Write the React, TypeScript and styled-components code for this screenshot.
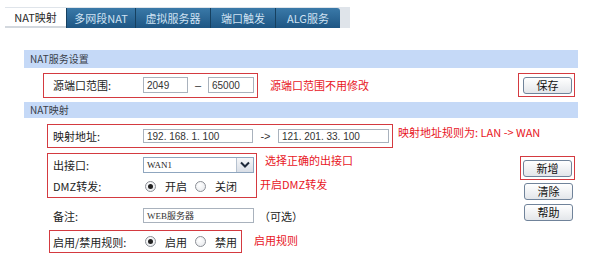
import { FC } from "react";
import styled, { createGlobalStyle, css } from "styled-components";

const colors = {
  text: "#333333",
  note: "#e8161e",
  annot: "#d43a40",
  bar: "#c5d9f7",
  inputBorder: "#a9b2bd",
  strip: "#dfe4ea",
};

const GlobalStyle = createGlobalStyle`
  body {
    margin: 0;
    background: #fff;
    color: ${colors.text};
    font-family: "Noto Sans CJK SC", "Noto Sans", sans-serif;
    font-size: 11px;
  }
`;

const Page = styled.div`
  width: 600px;
  height: 259px;
  overflow: hidden;
  padding-top: 7px;
  box-sizing: border-box;
`;

const TabStrip = styled.div`
  display: flex;
  margin-left: 5px;
  width: 345px;
  height: 21px;
  padding-top: 1px;
  box-sizing: border-box;
  background: ${colors.strip};
`;

const Tab = styled.div<{ $w: number; $active?: boolean; $last?: boolean }>`
  width: ${(p) => p.$w}px;
  display: flex;
  align-items: center;
  justify-content: center;
  font-size: 11px;
  box-sizing: border-box;
  ${(p) =>
    p.$active
      ? css`
          background: #fff;
          color: #2a2a2a;
          border-bottom: 2px solid #d3d8de;
        `
      : css`
          background: linear-gradient(#3a79a8, #1e5684);
          color: #cfe2f3;
          border-left: 1px solid #16405f;
        `}
  ${(p) => p.$last && "border-top-right-radius: 3px;"}
`;

const Panel = styled.div`
  margin: 22px 0 0 24px;
  width: 554px;
`;

const SectionBar = styled.div<{ $h: number }>`
  height: ${(p) => p.$h}px;
  line-height: ${(p) => p.$h}px;
  background: ${colors.bar};
  padding-left: 6px;
  font-size: 10px;
  color: #3a3f4a;
`;

const ServiceRow = styled.div`
  height: 34px;
  display: flex;
  align-items: center;
  padding: 0 3px 0 19px;
`;

const Body = styled.div`
  display: flex;
  height: 142px;
`;

const LeftCol = styled.div`
  flex: 1;
  min-width: 0;
  display: flex;
  flex-direction: column;
`;

const ButtonCol = styled.div`
  width: 55px;
  flex-shrink: 0;
  margin-right: 3px;
  padding-top: 38px;
  display: flex;
  flex-direction: column;
  gap: 3px;
`;

const Line = styled.div<{ $top: number; $left: number }>`
  display: flex;
  align-items: flex-start;
  margin-top: ${(p) => p.$top}px;
  margin-left: ${(p) => p.$left}px;
`;

const AnnotBox = styled.div<{ $w: number; $h: number; $pl: number; $col?: boolean }>`
  width: ${(p) => p.$w}px;
  height: ${(p) => p.$h}px;
  flex-shrink: 0;
  padding-left: ${(p) => p.$pl}px;
  box-sizing: border-box;
  border: 1px solid ${colors.annot};
  display: flex;
  flex-direction: ${(p) => (p.$col ? "column" : "row")};
  align-items: ${(p) => (p.$col ? "stretch" : "center")};
  justify-content: ${(p) => (p.$col ? "space-around" : "flex-start")};
  white-space: nowrap;
`;

const Field = styled.div<{ $h?: number }>`
  display: flex;
  align-items: center;
  height: ${(p) => p.$h ?? 22}px;
  white-space: nowrap;
`;

const Label = styled.span`
  width: 90px;
  flex-shrink: 0;
  font-size: 11px;
  color: #222;
`;

const TextInput = styled.div<{ $w: number; $h: number; $small?: boolean }>`
  width: ${(p) => p.$w}px;
  height: ${(p) => p.$h}px;
  flex-shrink: 0;
  box-sizing: border-box;
  border: 1px solid ${colors.inputBorder};
  background: #fff;
  padding-left: 3px;
  display: flex;
  align-items: center;
  font-family: "Liberation Sans", "Noto Sans CJK SC", sans-serif;
  font-size: ${(p) => (p.$small ? 9 : 10)}px;
  color: #333;
  white-space: nowrap;
`;

const Between = styled.span<{ $w: number }>`
  width: ${(p) => p.$w}px;
  flex-shrink: 0;
  text-align: center;
  font-family: "Liberation Sans", sans-serif;
  font-size: 11px;
  color: #333;
`;

const Note = styled.span<{ $ml: number; $mt?: number }>`
  margin-left: ${(p) => p.$ml}px;
  margin-top: ${(p) => p.$mt ?? 0}px;
  color: ${colors.note};
  font-size: 11px;
  white-space: nowrap;
  line-height: 14px;
`;

const NoteCol = styled.div`
  display: flex;
  flex-direction: column;
  gap: 10px;
`;

const Hint = styled.span`
  margin-left: 5px;
  font-size: 11px;
  color: #222;
`;

const Select = styled.div`
  width: 111px;
  height: 16px;
  box-sizing: border-box;
  border: 1px solid #8fa6bf;
  display: flex;
  align-items: stretch;
  background: #fff;
`;

const SelectValue = styled.span`
  flex: 1;
  padding-left: 3px;
  display: flex;
  align-items: center;
  font-family: "Liberation Serif", serif;
  font-size: 9px;
  color: #222;
`;

const SelectArrow = styled.span`
  width: 16px;
  display: flex;
  align-items: center;
  justify-content: center;
  background: linear-gradient(#f6f7f9, #d9dee6);
  border-left: 1px solid #b6c2d0;
`;

const Radio = styled.span<{ $on?: boolean }>`
  width: 11px;
  height: 11px;
  flex-shrink: 0;
  margin: 0 9px 0 2px;
  border-radius: 50%;
  box-sizing: border-box;
  border: 1px solid #8b8f96;
  background: radial-gradient(circle at 40% 35%, #fff, #e4e6ea);
  display: inline-flex;
  align-items: center;
  justify-content: center;
  &::after {
    content: "";
    width: 5px;
    height: 5px;
    border-radius: 50%;
    background: ${(p) => (p.$on ? "#222" : "transparent")};
  }
`;

const RadioText = styled.span`
  font-size: 11px;
  color: #222;
  margin-right: 6px;
  flex-shrink: 0;
  &:last-child {
    margin-right: 0;
  }
`;

const ButtonBox = styled.div<{ $pl: number; $marked?: boolean }>`
  height: ${(p) => (p.$marked ? 24 : 17)}px;
  box-sizing: border-box;
  padding-left: ${(p) => p.$pl}px;
  display: flex;
  align-items: center;
  border: 1px solid ${(p) => (p.$marked ? colors.annot : "transparent")};
`;

const Button = styled.button`
  width: 49px;
  height: 17px;
  padding: 0;
  border: 1px solid #70839a;
  border-radius: 3px;
  background: linear-gradient(#ffffff, #e3e6ea);
  font-family: "Noto Sans CJK SC", sans-serif;
  font-size: 11px;
  color: #111;
  line-height: 15px;
`;

const RadioGroup: FC<{ a: string; b: string }> = ({ a, b }) => (
  <>
    <Radio $on />
    <RadioText>{a}</RadioText>
    <Radio />
    <RadioText>{b}</RadioText>
  </>
);

const App: FC = () => {
  return (
    <Page>
      <GlobalStyle />
      <TabStrip>
        <Tab $w={61} $active>NAT映射</Tab>
        <Tab $w={69}>多网段NAT</Tab>
        <Tab $w={75}>虚拟服务器</Tab>
        <Tab $w={65}>端口触发</Tab>
        <Tab $w={65} $last>ALG服务</Tab>
      </TabStrip>

      <Panel>
        <SectionBar $h={18}>NAT服务设置</SectionBar>
        <ServiceRow>
          <AnnotBox $w={215} $h={25} $pl={9}>
            <Label>源端口范围:</Label>
            <TextInput $w={45} $h={16}>2049</TextInput>
            <Between $w={20}>–</Between>
            <TextInput $w={46} $h={16}>65000</TextInput>
          </AnnotBox>
          <Note $ml={12}>源端口范围不用修改</Note>
          <ButtonBox $pl={4} $marked style={{ marginLeft: "auto", width: 57 }}>
            <Button>保存</Button>
          </ButtonBox>
        </ServiceRow>

        <SectionBar $h={16}>NAT映射</SectionBar>
        <Body>
          <LeftCol>
            <Line $top={6} $left={23}>
              <AnnotBox $w={346} $h={24} $pl={5}>
                <Label>映射地址:</Label>
                <TextInput $w={110} $h={14}>192. 168. 1. 100</TextInput>
                <Between $w={25}>-&gt;</Between>
                <TextInput $w={111} $h={14}>121. 201. 33. 100</TextInput>
              </AnnotBox>
              <Note $ml={5} $mt={1}>映射地址规则为: LAN -&gt; WAN</Note>
            </Line>

            <Line $top={5} $left={23}>
              <AnnotBox $w={210} $h={45} $pl={5} $col>
                <Field>
                  <Label>出接口:</Label>
                  <Select>
                    <SelectValue>WAN1</SelectValue>
                    <SelectArrow>
                      <svg width="10" height="7" viewBox="0 0 10 7">
                        <polyline points="1,1.5 5,5.5 9,1.5" fill="none" stroke="#1e2a3a" strokeWidth="2" />
                      </svg>
                    </SelectArrow>
                  </Select>
                </Field>
                <Field>
                  <Label>DMZ转发:</Label>
                  <RadioGroup a="开启" b="关闭" />
                </Field>
              </AnnotBox>
              <NoteCol>
                <Note $ml={8}>选择正确的出接口</Note>
                <Note $ml={3}>开启DMZ转发</Note>
              </NoteCol>
            </Line>

            <Line $top={10} $left={29}>
              <Field $h={15}>
                <Label>备注:</Label>
                <TextInput $w={111} $h={15} $small>
                  <span style={{ fontFamily: '"Liberation Serif", serif' }}>WEB</span>服务器
                </TextInput>
                <Hint>（可选）</Hint>
              </Field>
            </Line>

            <Line $top={7} $left={25}>
              <AnnotBox $w={193} $h={23} $pl={3}>
                <Label>启用/禁用规则:</Label>
                <RadioGroup a="启用" b="禁用" />
              </AnnotBox>
              <Note $ml={12} $mt={3}>启用规则</Note>
            </Line>
          </LeftCol>

          <ButtonCol>
            <ButtonBox $pl={2} $marked>
              <Button>新增</Button>
            </ButtonBox>
            <ButtonBox $pl={3}>
              <Button>清除</Button>
            </ButtonBox>
            <ButtonBox $pl={3} style={{ marginTop: 1 }}>
              <Button>帮助</Button>
            </ButtonBox>
          </ButtonCol>
        </Body>
      </Panel>
    </Page>
  );
};

export default App;
